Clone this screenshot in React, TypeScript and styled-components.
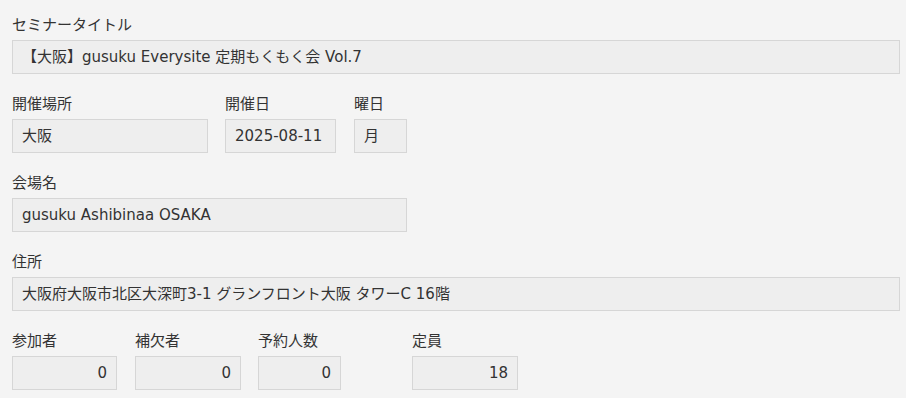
import React from "react";
import styled, { createGlobalStyle } from "styled-components";

const GlobalStyle = createGlobalStyle`
  html, body {
    margin: 0;
    padding: 0;
    background: #f4f4f4;
  }
  body {
    font-family: "DejaVu Sans", "Noto Sans CJK JP", sans-serif;
    font-size: 15px;
    color: #333;
  }
`;

const Form = styled.div`
  display: flex;
  flex-direction: column;
  gap: 20px;
  padding: 15px 6px 8px 12px;
`;

const Row = styled.div`
  display: flex;
  align-items: flex-start;
`;

const Column = styled.div<{ $width?: number; $gap?: number }>`
  display: flex;
  flex-direction: column;
  width: ${(p) => (p.$width ? `${p.$width}px` : "100%")};
  margin-left: ${(p) => p.$gap ?? 0}px;
  flex: none;
`;

const Label = styled.div`
  height: 20px;
  line-height: 20px;
  margin-bottom: 5px;
  white-space: nowrap;
`;

const Field = styled.div<{ $align?: "left" | "right" }>`
  box-sizing: border-box;
  height: 34px;
  line-height: 32px;
  padding: 0 9px;
  background: #eeeeee;
  border: 1px solid #d6d6d6;
  text-align: ${(p) => p.$align ?? "left"};
  white-space: nowrap;
  overflow: hidden;
`;

type Item = { label: string; value: string; width?: number; gap?: number; align?: "left" | "right" };

const rows: Item[][] = [
  [{ label: "セミナータイトル", value: "【大阪】gusuku Everysite 定期もくもく会 Vol.7" }],
  [
    { label: "開催場所", value: "大阪", width: 196 },
    { label: "開催日", value: "2025-08-11", width: 111, gap: 17 },
    { label: "曜日", value: "月", width: 53, gap: 18 },
  ],
  [{ label: "会場名", value: "gusuku Ashibinaa OSAKA", width: 395 }],
  [{ label: "住所", value: "大阪府大阪市北区大深町3-1 グランフロント大阪 タワーC 16階" }],
  [
    { label: "参加者", value: "0", width: 105, align: "right" },
    { label: "補欠者", value: "0", width: 106, gap: 18, align: "right" },
    { label: "予約人数", value: "0", width: 83, gap: 17, align: "right" },
    { label: "定員", value: "18", width: 106, gap: 71, align: "right" },
  ],
];

function App() {
  return (
    <>
      <GlobalStyle />
      <Form>
        {rows.map((row, i) => (
          <Row key={i}>
            {row.map((item) => (
              <Column key={item.label} $width={item.width} $gap={item.gap}>
                <Label>{item.label}</Label>
                <Field $align={item.align}>{item.value}</Field>
              </Column>
            ))}
          </Row>
        ))}
      </Form>
    </>
  );
}

export default App;
